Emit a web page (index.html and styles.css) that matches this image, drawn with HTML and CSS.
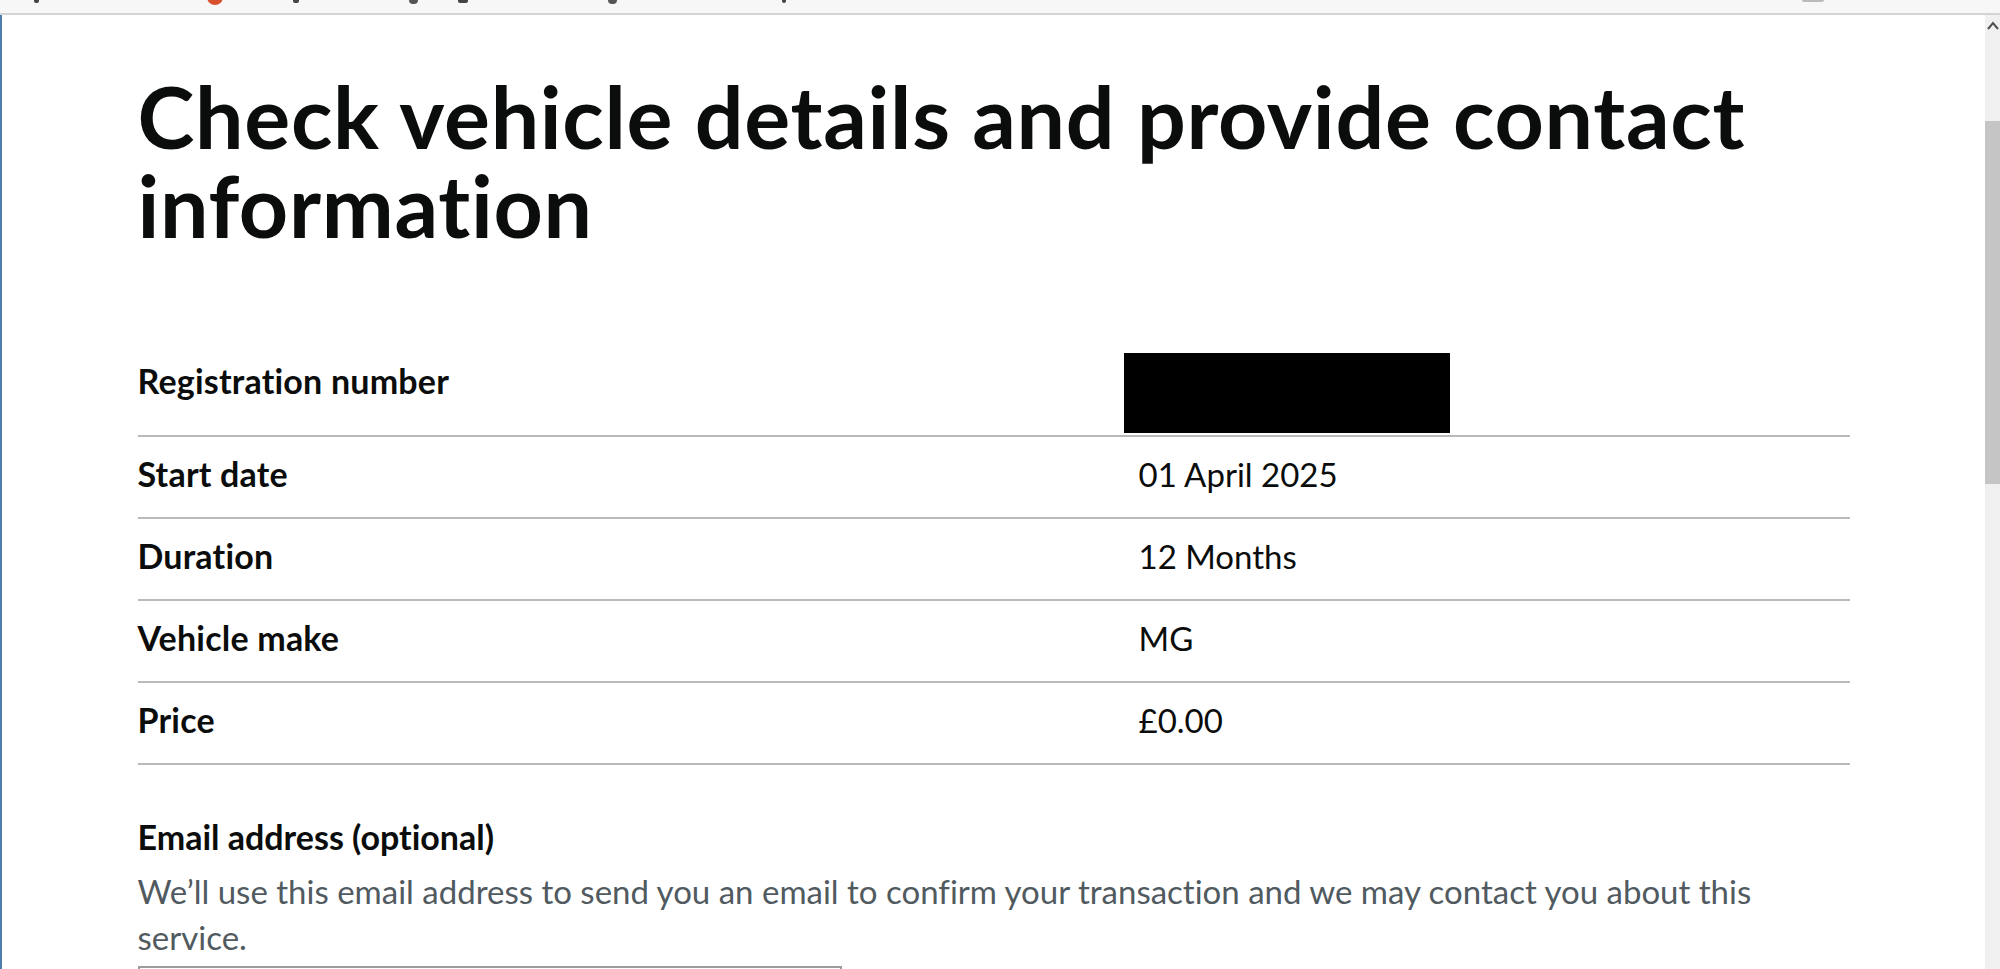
FILE: index.html
```html
<!DOCTYPE html>
<html lang="en">
<head>
    <meta charset="UTF-8">
    <meta name="viewport" content="width=device-width, initial-scale=1.0">
    <title>Check vehicle details and provide contact information</title>
    <link rel="stylesheet" href="styles.css">
</head>
<body>
    <!-- bottom edge of the address bar -->
    <div class="browser-bar">
        <span class="mark mark-a"></span>
        <span class="mark mark-fav"></span>
        <span class="mark mark-b"></span>
        <span class="mark mark-c"></span>
        <span class="mark mark-d"></span>
        <span class="mark mark-e"></span>
        <span class="mark mark-f"></span>
        <span class="mark mark-g"></span>
    </div>

    <div class="viewport">
        <div class="frame-edge"></div>

        <main class="page">
            <h1 class="heading-xl">Check vehicle details and provide contact information</h1>

            <dl class="summary-list">
                <div class="summary-row summary-row--reg">
                    <dt class="summary-key">Registration number</dt>
                    <dd class="summary-value"><span class="redacted"></span></dd>
                </div>
                <div class="summary-row">
                    <dt class="summary-key">Start date</dt>
                    <dd class="summary-value">01 April 2025</dd>
                </div>
                <div class="summary-row">
                    <dt class="summary-key">Duration</dt>
                    <dd class="summary-value">12 Months</dd>
                </div>
                <div class="summary-row">
                    <dt class="summary-key">Vehicle make</dt>
                    <dd class="summary-value">MG</dd>
                </div>
                <div class="summary-row">
                    <dt class="summary-key">Price</dt>
                    <dd class="summary-value">£0.00</dd>
                </div>
            </dl>

            <div class="form-group">
                <label class="label" for="email">Email address (optional)</label>
                <div class="hint" id="email-hint">We’ll use this email address to send you an email to confirm your transaction and we may contact you about this service.</div>
                <input class="input" id="email" type="email" aria-describedby="email-hint">
            </div>
        </main>

        <div class="scrollbar">
            <svg class="scroll-arrow" width="14" height="16" viewBox="0 0 14 16">
                <polyline points="2,11 7,5 12,11" fill="none" stroke="#505050" stroke-width="2"/>
            </svg>
            <div class="scroll-thumb"></div>
        </div>
    </div>
</body>
</html>
```

FILE: styles.css
```css
html, body {
    margin: 0;
    height: 100%;
    overflow: hidden;
}
body {
    display: flex;
    flex-direction: column;
    font-family: Lato, "Liberation Sans", Arial, sans-serif;
    font-variant-ligatures: none;
    color: #0b0c0c;
    background: #fff;
}

/* address bar remnant */
.browser-bar {
    flex: none;
    height: 13px;
    background: #f7f7f8;
    border-bottom: 2px solid #d4d4d6;
    display: flex;
    align-items: flex-start;
    overflow: hidden;
}
.mark {
    width: 5px;
    height: 3px;
    background: #444;
    border-radius: 0 0 2px 2px;
}
.mark-a { margin-left: 34px; }
.mark-fav {
    margin-left: 168px;
    width: 16px;
    height: 16px;
    margin-top: -11px;
    border-radius: 50%;
    background: #d9512c;
}
.mark-b { margin-left: 70px; width: 6px; }
.mark-c { margin-left: 110px; width: 9px; height: 4px; border-radius: 0 0 5px 5px; background: #555; }
.mark-d { margin-left: 40px; width: 10px; }
.mark-e { margin-left: 140px; width: 9px; height: 4px; border-radius: 0 0 5px 5px; background: #555; }
.mark-f { margin-left: 165px; width: 4px; }
.mark-g { margin-left: 1016px; width: 22px; height: 2px; background: #bbb; }

.viewport {
    flex: 1;
    display: flex;
    min-height: 0;
}
.frame-edge {
    flex: none;
    width: 2px;
    background: #4d80ae;
}
.page {
    flex: 1;
    min-width: 0;
    display: flex;
    flex-direction: column;
    align-items: center;
}
.page > * {
    width: 1712px;
}

.heading-xl {
    margin: 56px 0 0;
    font-size: 86px;
    line-height: 89px;
    font-weight: 700;
    letter-spacing: 0.7px;
}

/* summary list */
.summary-list {
    margin: 92px 0 0;
}
.summary-row {
    display: flex;
    align-items: flex-start;
    border-bottom: 2px solid #b8babc;
}
.summary-key,
.summary-value {
    margin: 0;
    padding: 15px 0 21px;
    font-size: 34px;
    line-height: 44px;
}
.summary-key {
    flex: none;
    width: 1001px;
    font-weight: 700;
    letter-spacing: 0.2px;
}
.summary-value {
    flex: 1;
    font-size: 33px;
}
.summary-row--reg .summary-key {
    padding-top: 18px;
}
.summary-row--reg .summary-value {
    padding: 0;
}
.redacted {
    display: block;
    width: 326px;
    height: 80px;
    margin: 12px 0 2px -15px;
    background: #000;
}

/* email field */
.form-group {
    margin-top: 50px;
}
.label {
    display: block;
    font-size: 34px;
    line-height: 44px;
    font-weight: 700;
}
.hint {
    margin-top: 9px;
    font-size: 33px;
    line-height: 46px;
    color: #505a5f;
}
.input {
    display: block;
    box-sizing: border-box;
    width: 704px;
    height: 71px;
    margin-top: 6px;
    border: 2px solid #9a9c9e;
    font-size: 34px;
}

/* scrollbar */
.scrollbar {
    flex: none;
    width: 15px;
    background: #f0f0f0;
    display: flex;
    flex-direction: column;
    align-items: center;
}
.scroll-arrow {
    flex: none;
    margin-top: 3px;
}
.scroll-thumb {
    width: 100%;
    height: 363px;
    margin-top: 87px;
    background: #c5c5c5;
}
```
